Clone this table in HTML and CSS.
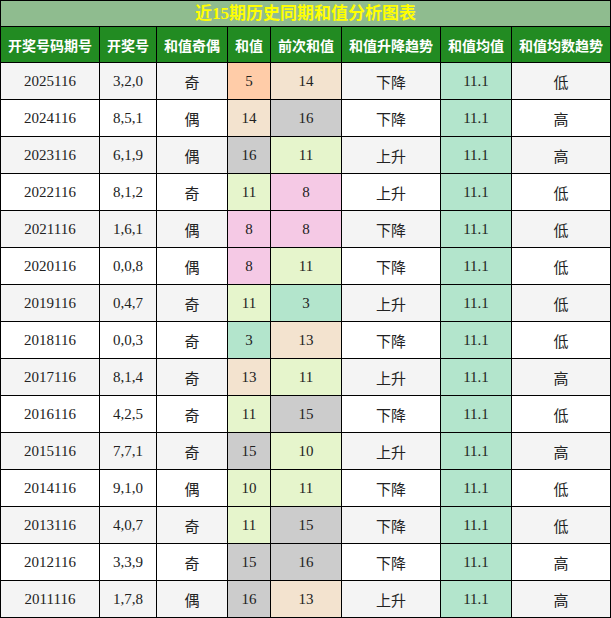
FILE: index.html
```html
<!DOCTYPE html>
<html lang="zh">
<head>
<meta charset="utf-8">
<title>近15期历史同期和值分析图表</title>
<link rel="stylesheet" href="styles.css">
</head>
<body>
<table class="chart">
  <colgroup>
    <col class="w99"><col class="w57"><col class="w71"><col class="w43"><col class="w71"><col class="w99"><col class="w71"><col class="w99">
  </colgroup>
  <thead>
    <tr class="title"><th colspan="8">近15期历史同期和值分析图表</th></tr>
    <tr class="head">
      <th>开奖号码期号</th><th>开奖号</th><th>和值奇偶</th><th>和值</th><th>前次和值</th><th>和值升降趋势</th><th>和值均值</th><th>和值均数趋势</th>
    </tr>
  </thead>
  <tbody>
    <tr class="odd"><td>2025116</td><td>3,2,0</td><td class="cn">奇</td><td class="v5">5</td><td class="v14">14</td><td class="cn">下降</td><td class="avg">11.1</td><td class="cn">低</td></tr>
    <tr><td>2024116</td><td>8,5,1</td><td class="cn">偶</td><td class="v14">14</td><td class="v16">16</td><td class="cn">下降</td><td class="avg">11.1</td><td class="cn">高</td></tr>
    <tr class="odd"><td>2023116</td><td>6,1,9</td><td class="cn">偶</td><td class="v16">16</td><td class="v11">11</td><td class="cn">上升</td><td class="avg">11.1</td><td class="cn">高</td></tr>
    <tr><td>2022116</td><td>8,1,2</td><td class="cn">奇</td><td class="v11">11</td><td class="v8">8</td><td class="cn">上升</td><td class="avg">11.1</td><td class="cn">低</td></tr>
    <tr class="odd"><td>2021116</td><td>1,6,1</td><td class="cn">偶</td><td class="v8">8</td><td class="v8">8</td><td class="cn">下降</td><td class="avg">11.1</td><td class="cn">低</td></tr>
    <tr><td>2020116</td><td>0,0,8</td><td class="cn">偶</td><td class="v8">8</td><td class="v11">11</td><td class="cn">下降</td><td class="avg">11.1</td><td class="cn">低</td></tr>
    <tr class="odd"><td>2019116</td><td>0,4,7</td><td class="cn">奇</td><td class="v11">11</td><td class="v3">3</td><td class="cn">上升</td><td class="avg">11.1</td><td class="cn">低</td></tr>
    <tr><td>2018116</td><td>0,0,3</td><td class="cn">奇</td><td class="v3">3</td><td class="v14">13</td><td class="cn">下降</td><td class="avg">11.1</td><td class="cn">低</td></tr>
    <tr class="odd"><td>2017116</td><td>8,1,4</td><td class="cn">奇</td><td class="v14">13</td><td class="v11">11</td><td class="cn">上升</td><td class="avg">11.1</td><td class="cn">高</td></tr>
    <tr><td>2016116</td><td>4,2,5</td><td class="cn">奇</td><td class="v11">11</td><td class="v16">15</td><td class="cn">下降</td><td class="avg">11.1</td><td class="cn">低</td></tr>
    <tr class="odd"><td>2015116</td><td>7,7,1</td><td class="cn">奇</td><td class="v16">15</td><td class="v11">10</td><td class="cn">上升</td><td class="avg">11.1</td><td class="cn">高</td></tr>
    <tr><td>2014116</td><td>9,1,0</td><td class="cn">偶</td><td class="v11">10</td><td class="v11">11</td><td class="cn">下降</td><td class="avg">11.1</td><td class="cn">低</td></tr>
    <tr class="odd"><td>2013116</td><td>4,0,7</td><td class="cn">奇</td><td class="v11">11</td><td class="v16">15</td><td class="cn">下降</td><td class="avg">11.1</td><td class="cn">低</td></tr>
    <tr><td>2012116</td><td>3,3,9</td><td class="cn">奇</td><td class="v16">15</td><td class="v16">16</td><td class="cn">下降</td><td class="avg">11.1</td><td class="cn">高</td></tr>
    <tr class="odd"><td>2011116</td><td>1,7,8</td><td class="cn">偶</td><td class="v16">16</td><td class="v14">13</td><td class="cn">上升</td><td class="avg">11.1</td><td class="cn">高</td></tr>
  </tbody>
</table>
</body>
</html>
```

FILE: styles.css
```css
html, body {
  margin: 0;
  padding: 0;
  background: #ffffff;
}

.chart {
  width: 611px;
  table-layout: fixed;
  border-collapse: collapse;
  font-family: "Liberation Serif", "Noto Sans CJK SC", serif;
  color: #222222;
}

.w99 { width: 99px; }
.w57 { width: 57px; }
.w71 { width: 71px; }
.w43 { width: 43px; }

.chart th,
.chart td {
  border: 1px solid #000000;
  padding: 0;
  text-align: center;
  vertical-align: middle;
}

.title th {
  height: 25px;
  background: #8fbc8f;
  color: #ffff00;
  font-size: 17px;
  font-weight: bold;
  line-height: 25px;
}

.head th {
  height: 35px;
  background: #228b22;
  color: #ffffff;
  font-family: "Noto Sans CJK SC", sans-serif;
  font-size: 14px;
  font-weight: bold;
}

.chart td {
  height: 36px;
  font-size: 15px;
  background: #ffffff;
}

.chart tr.odd td {
  background: #f4f4f4;
}

.chart td.cn {
  font-family: "Noto Sans CJK SC", sans-serif;
}

.chart tr td.v3,
.chart tr td.avg { background: #b3e5cc; }
.chart tr td.v5 { background: #ffcca8; }
.chart tr td.v8 { background: #f5c9e5; }
.chart tr td.v11 { background: #e6f5cc; }
.chart tr td.v14 { background: #f3e3cf; }
.chart tr td.v16 { background: #cccccc; }
```
